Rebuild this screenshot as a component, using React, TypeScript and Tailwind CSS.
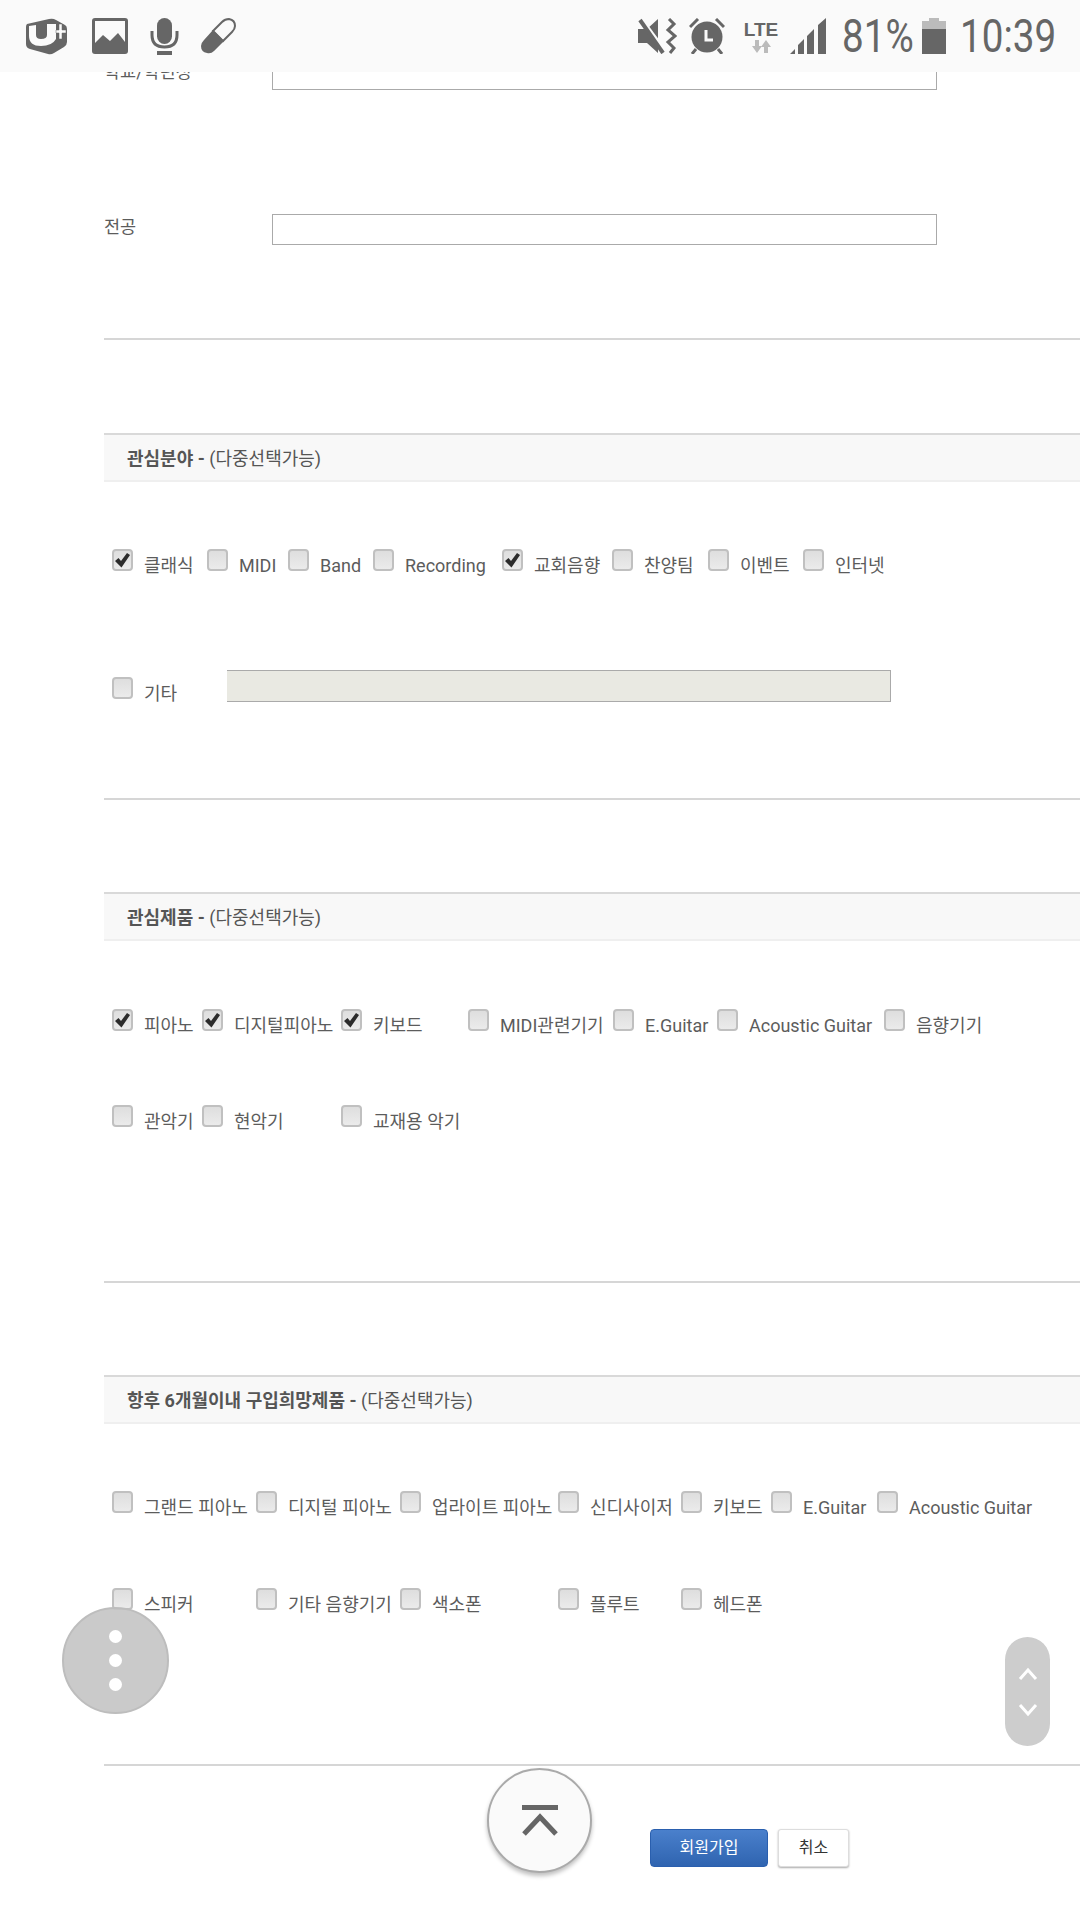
import type { ReactNode } from 'react';

function CheckBox({ checked }: { checked?: boolean }) {
  return (
    <span className="flex h-[22px] w-[21px] shrink-0 items-center justify-center rounded-[4px] border-2 border-[#c0c0c0] bg-gradient-to-b from-[#dedede] to-[#ebebeb]">
      {checked && (
        <svg width="17" height="17" viewBox="0 0 17 17">
          <path d="M1 9 L4.5 6 L7 9 L13 1 L16 3 L7.5 15.5 Z" fill="#2b2b2b" />
        </svg>
      )}
    </span>
  );
}

function Opt({ label, checked }: { label: string; checked?: boolean }) {
  return (
    <label className="flex items-start gap-[11px] whitespace-nowrap">
      <CheckBox checked={checked} />
      <span className="pt-[6px] text-[18px] leading-[22px] text-[#5c5c5c]">{label}</span>
    </label>
  );
}

function Head({ title }: { title: string }) {
  return (
    <div className="h-[49px] border-t-2 border-b-2 border-t-[#d9d9d9] border-b-[#efefef] bg-[#f8f8f8] pl-[23px] text-[18px] leading-[47px] text-[#555]">
      <b className="font-bold text-[#555]">{title} - </b>(다중선택가능)
    </div>
  );
}

function Rule({ className }: { className: string }) {
  return <div className={`h-[2px] bg-[#d6d6d6] ${className}`} />;
}

function TextRow({ label, className }: { label: string; className: string }) {
  return (
    <div className={`flex h-[31px] ${className}`}>
      <span className="w-[168px] text-[17.5px] leading-[26px] text-[#5c5c5c]">{label}</span>
      <div className="h-[31px] w-[665px] border border-[#aaa] bg-white" />
    </div>
  );
}

function StatusBar() {
  return (
    <div className="absolute left-0 top-0 flex h-[72px] w-full items-center bg-[#fafafa] text-[#666]">
      {/* U+ */}
      <svg className="ml-[25px]" width="43" height="37" viewBox="0 0 43 37">
        <path d="M2 6 L24 1 Q28 0 31 2 L40 7 Q42 8 42 11 V24 Q42 27 39 29 L29 35 Q26 37 23 36 L5 31 Q1 30 1 26 V9 Q1 7 2 6 Z" fill="#666" />
        <path d="M4 8 V18 Q4 28 16 28 Q27 28 31 21 V6 H22 V17 Q22 21 16 21 Q11 21 11 17 V7 Z" fill="#fafafa" />
        <path d="M34 6 H37 V12 H41 V15 H37 V21 H34 V15 H31 V12 H34 Z" fill="#fafafa" stroke="#666" strokeWidth="0.5" />
      </svg>
      {/* picture */}
      <svg className="ml-[24px]" width="36" height="36" viewBox="0 0 36 36">
        <rect width="36" height="36" rx="3" fill="#666" />
        <path d="M3 3 H33 V24 L26 15 L18 23 L11 17 L3 25 Z" fill="#fafafa" />
      </svg>
      {/* mic */}
      <svg className="ml-[22px]" width="29" height="37" viewBox="0 0 29 37">
        <rect x="7" y="0" width="15" height="26" rx="7.5" fill="#666" />
        <path d="M2 13 V17 Q2 29 14.5 29 Q27 29 27 17 V13" fill="none" stroke="#666" strokeWidth="3" />
        <rect x="7" y="33" width="15" height="4" fill="#666" />
      </svg>
      {/* pill */}
      <svg className="ml-[21px]" width="36" height="36" viewBox="0 0 36 36">
        <path d="M22 4 Q25 1 29 1 Q35 2 35 8 Q35 11 32 14 L23 23 L13 13 Z" fill="#fafafa" stroke="#666" strokeWidth="2" />
        <path d="M13 12 L24 23 L14 33 Q11 36 7 35 Q1 34 1 28 Q1 25 4 22 Z" fill="#666" />
      </svg>

      <div className="ml-auto flex items-center">
        {/* vibrate mute */}
        <svg width="39" height="36" viewBox="0 0 39 36">
          <path d="M0 11 H9 L20 1 V35 L9 25 H0 Z" fill="#666" />
          <path d="M4 3 L27 34" stroke="#fafafa" strokeWidth="5" />
          <path d="M2 2 L25 35" stroke="#666" strokeWidth="4" />
          <path d="M31 1 L36 6 L30 12 L37 18 L30 24 L36 30 L32 35" fill="none" stroke="#666" strokeWidth="3" />
        </svg>
        {/* alarm */}
        <svg className="ml-[12px]" width="36" height="36" viewBox="0 0 36 36">
          <circle cx="18" cy="19" r="15.5" fill="#666" />
          <path d="M17 12 V22 H24" fill="none" stroke="#fafafa" strokeWidth="3" />
          <path d="M1 9 L9 1 M35 9 L27 1 M7 31 L3 36 M29 31 L33 36" stroke="#666" strokeWidth="3" />
        </svg>
        <div className="ml-[17px] flex w-[38px] flex-col items-center font-['Liberation_Sans',sans-serif]">
          <span className="text-[19px] font-bold leading-[20px]">LTE</span>
          <svg width="22" height="13" viewBox="0 0 22 13">
            <path d="M5 0 H9 V6 H12 L7 13 L2 6 H5 Z" fill="#bbb" />
            <path d="M14 13 H18 V7 H21 L16 0 L11 7 H14 Z" fill="#bbb" />
          </svg>
        </div>
        {/* signal */}
        <svg className="ml-[10px]" width="36" height="36" viewBox="0 0 36 36">
          <path d="M0 36 L5 31 V36 Z M8 36 V27 L14 21 V36 Z M17 36 V18 L24 11 V36 Z M28 36 V7 L36 0 V36 Z" fill="#666" />
        </svg>
        <span className="ml-[16px] inline-block w-[70px] origin-left scale-x-[0.84] text-[46px] leading-none">81%</span>
        <svg className="ml-[10px]" width="24" height="36" viewBox="0 0 24 36">
          <rect x="7" y="0" width="10" height="4" fill="#bbb" />
          <rect x="0" y="3" width="24" height="8" fill="#bbb" />
          <rect x="0" y="11" width="24" height="25" fill="#666" />
        </svg>
        <span className="ml-[14px] mr-[25px] inline-block w-[95px] origin-left scale-x-[0.84] text-[46px] leading-none">10:39</span>
      </div>
    </div>
  );
}

function Floating({ className, children }: { className: string; children?: ReactNode }) {
  return <div className={`absolute ${className}`}>{children}</div>;
}

export default function App() {
  return (
    <div className="relative h-[1920px] w-[1080px] overflow-hidden bg-white font-['Roboto','Noto_Sans_CJK_KR',sans-serif]">
      <div className="pl-[104px] pt-[59px]">
        <TextRow label="학교/학년정" className="" />
        <TextRow label="전공" className="mt-[124px]" />
        <Rule className="mt-[93px]" />

        <div className="mt-[93px]"><Head title="관심분야" /></div>
        <div className="ml-[8px] mt-[67px] grid grid-cols-[95px_81px_85px_129px_110px_96px_95px_120px]">
          <Opt label="클래식" checked />
          <Opt label="MIDI" />
          <Opt label="Band" />
          <Opt label="Recording" />
          <Opt label="교회음향" checked />
          <Opt label="찬양팀" />
          <Opt label="이벤트" />
          <Opt label="인터넷" />
        </div>
        <div className="ml-[8px] mt-[100px] flex items-start">
          <Opt label="기타" />
          <div className="ml-[50px] -mt-[7px] h-[32px] w-[664px] border-t border-r border-b border-[#aaa] bg-[#e9e9e2]" />
        </div>
        <Rule className="mt-[93px]" />

        <div className="mt-[92px]"><Head title="관심제품" /></div>
        <div className="ml-[8px] mt-[68px] grid grid-cols-[90px_139px_127px_145px_104px_167px_100px] gap-y-[68px]">
          <Opt label="피아노" checked />
          <Opt label="디지털피아노" checked />
          <Opt label="키보드" checked />
          <Opt label="MIDI관련기기" />
          <Opt label="E.Guitar" />
          <Opt label="Acoustic Guitar" />
          <Opt label="음향기기" />
          <Opt label="관악기" />
          <Opt label="현악기" />
          <Opt label="교재용 악기" />
        </div>
        <Rule className="mt-[148px]" />

        <div className="mt-[92px]"><Head title="항후 6개월이내 구입희망제품" /></div>
        <div className="ml-[8px] mt-[67px] grid grid-cols-[144px_144px_158px_123px_90px_106px_140px] gap-y-[69px]">
          <Opt label="그랜드 피아노" />
          <Opt label="디지털 피아노" />
          <Opt label="업라이트 피아노" />
          <Opt label="신디사이저" />
          <Opt label="키보드" />
          <Opt label="E.Guitar" />
          <Opt label="Acoustic Guitar" />
          <Opt label="스피커" />
          <Opt label="기타 음향기기" />
          <Opt label="색소폰" />
          <Opt label="플루트" />
          <Opt label="헤드폰" />
        </div>
        <Rule className="mt-[148px]" />

        <div className="ml-[546px] mt-[63px] flex gap-[10px] text-[16px]">
          <button className="h-[38px] w-[118px] rounded-[4px] border border-[#2a5fae] bg-gradient-to-b from-[#4a80cc] to-[#2f64b0] text-white">회원가입</button>
          <button className="h-[38px] w-[71px] rounded-[3px] border border-[#ddd] bg-white text-[#333] shadow-[0_1px_2px_#aaa]">취소</button>
        </div>
      </div>

      <StatusBar />

      <Floating className="left-[62px] top-[1607px] flex h-[107px] w-[107px] flex-col items-center justify-center gap-[11px] rounded-full border-2 border-[#bdbdbd] bg-[#c4c4c4]/90">
        <span className="h-[13px] w-[13px] rounded-full bg-white" />
        <span className="h-[13px] w-[13px] rounded-full bg-white" />
        <span className="h-[13px] w-[13px] rounded-full bg-white" />
      </Floating>

      <Floating className="left-[1005px] top-[1637px] flex h-[109px] w-[45px] flex-col items-center justify-center gap-[20px] rounded-full bg-[#cdcdcd]">
        <svg width="20" height="16" viewBox="0 0 20 16"><path d="M2 13 L10 4 L18 13" fill="none" stroke="#fff" strokeWidth="3" /></svg>
        <svg width="20" height="16" viewBox="0 0 20 16"><path d="M2 3 L10 12 L18 3" fill="none" stroke="#fff" strokeWidth="3" /></svg>
      </Floating>

      <Floating className="left-[487px] top-[1768px] flex h-[105px] w-[105px] items-center justify-center rounded-full border-2 border-[#aaa] bg-[#fafafa] shadow-[0_3px_4px_rgba(0,0,0,0.25)]">
        <svg width="38" height="32" viewBox="0 0 38 32">
          <rect x="1" y="0" width="36" height="5" fill="#666" />
          <path d="M3 29 L19 12 L35 29" fill="none" stroke="#666" strokeWidth="5" />
        </svg>
      </Floating>
    </div>
  );
}
